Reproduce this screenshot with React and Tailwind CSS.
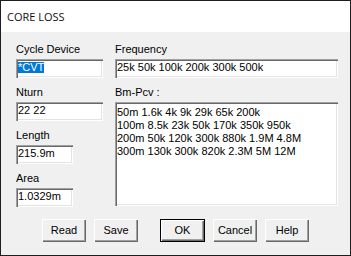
import React from "react";

const sunken =
  "bg-white shadow-[inset_1px_1px_0_#a0a0a0,inset_2px_2px_0_#696969,inset_-1px_-1px_0_#ffffff,inset_-2px_-2px_0_#e3e3e3] p-[2px]";

const raised =
  "shadow-[inset_1px_1px_0_#ffffff,inset_-1px_-1px_0_#696969,inset_-2px_-2px_0_#a0a0a0]";

function Field({ label, value, width, selected, first }) {
  return (
    <div className={first ? "" : "mt-[8px]"}>
      <div className="h-[13px] mb-[3px] whitespace-nowrap">{label}</div>
      <div className={`${sunken} h-[19px] ${width}`}>
        {selected ? (
          <span className="inline-block mt-[1px] bg-[#0078d7] text-white leading-[11px]">{value}</span>
        ) : (
          <div className="whitespace-nowrap">{value}</div>
        )}
      </div>
    </div>
  );
}

function Btn({ children, def }) {
  return (
    <button
      className={`h-[23px] bg-[#f0f0f0] text-black leading-[13px] flex items-center justify-center ${
        def ? "w-[45px] border border-black" : "w-[44px]"
      } ${raised}`}
    >
      {children}
    </button>
  );
}

export default function App() {
  return (
    <div className="w-[351px] h-[256px] border border-[#1e1e1e] flex flex-col font-['Liberation_Sans',Arial,sans-serif] text-[11px] leading-[13px] text-black">
      <div className="h-[31px] bg-white flex items-center pl-[6px] font-['Open_Sans',sans-serif] text-[11px] text-[#111]">
        CORE LOSS
      </div>
      <div className="flex-1 bg-[#f0f0f0] pl-[15px] pt-[11px]">
        <div className="flex gap-[12px]">
          <div className="w-[87px] flex flex-col">
            <Field first label="Cycle Device" value="*CVT" width="w-[87px]" selected />
            <Field label="Nturn" value="22 22" width="w-[87px]" />
            <Field label="Length" value="215.9m" width="w-[57px]" />
            <Field label="Area" value="1.0329m" width="w-[57px]" />
          </div>
          <div className="w-[223px] flex flex-col">
            <div className="h-[13px] mb-[3px]">Frequency</div>
            <div className={`${sunken} h-[19px] whitespace-nowrap`}>25k 50k 100k 200k 300k 500k</div>
            <div className="h-[13px] mt-[8px] mb-[3px]">Bm-Pcv :</div>
            <div className={`${sunken} h-[104px] pt-[4px] whitespace-nowrap`}>
              <div>50m 1.6k 4k 9k 29k 65k 200k</div>
              <div>100m 8.5k 23k 50k 170k 350k 950k</div>
              <div>200m 50k 120k 300k 880k 1.9M 4.8M</div>
              <div>300m 130k 300k 820k 2.3M 5M 12M</div>
            </div>
          </div>
        </div>
        <div className="flex mt-[12px] ml-[26px]">
          <Btn>Read</Btn>
          <div className="ml-[8px]"><Btn>Save</Btn></div>
          <div className="ml-[22px]"><Btn def>OK</Btn></div>
          <div className="ml-[8px]"><Btn>Cancel</Btn></div>
          <div className="ml-[8px]"><Btn>Help</Btn></div>
        </div>
      </div>
    </div>
  );
}
